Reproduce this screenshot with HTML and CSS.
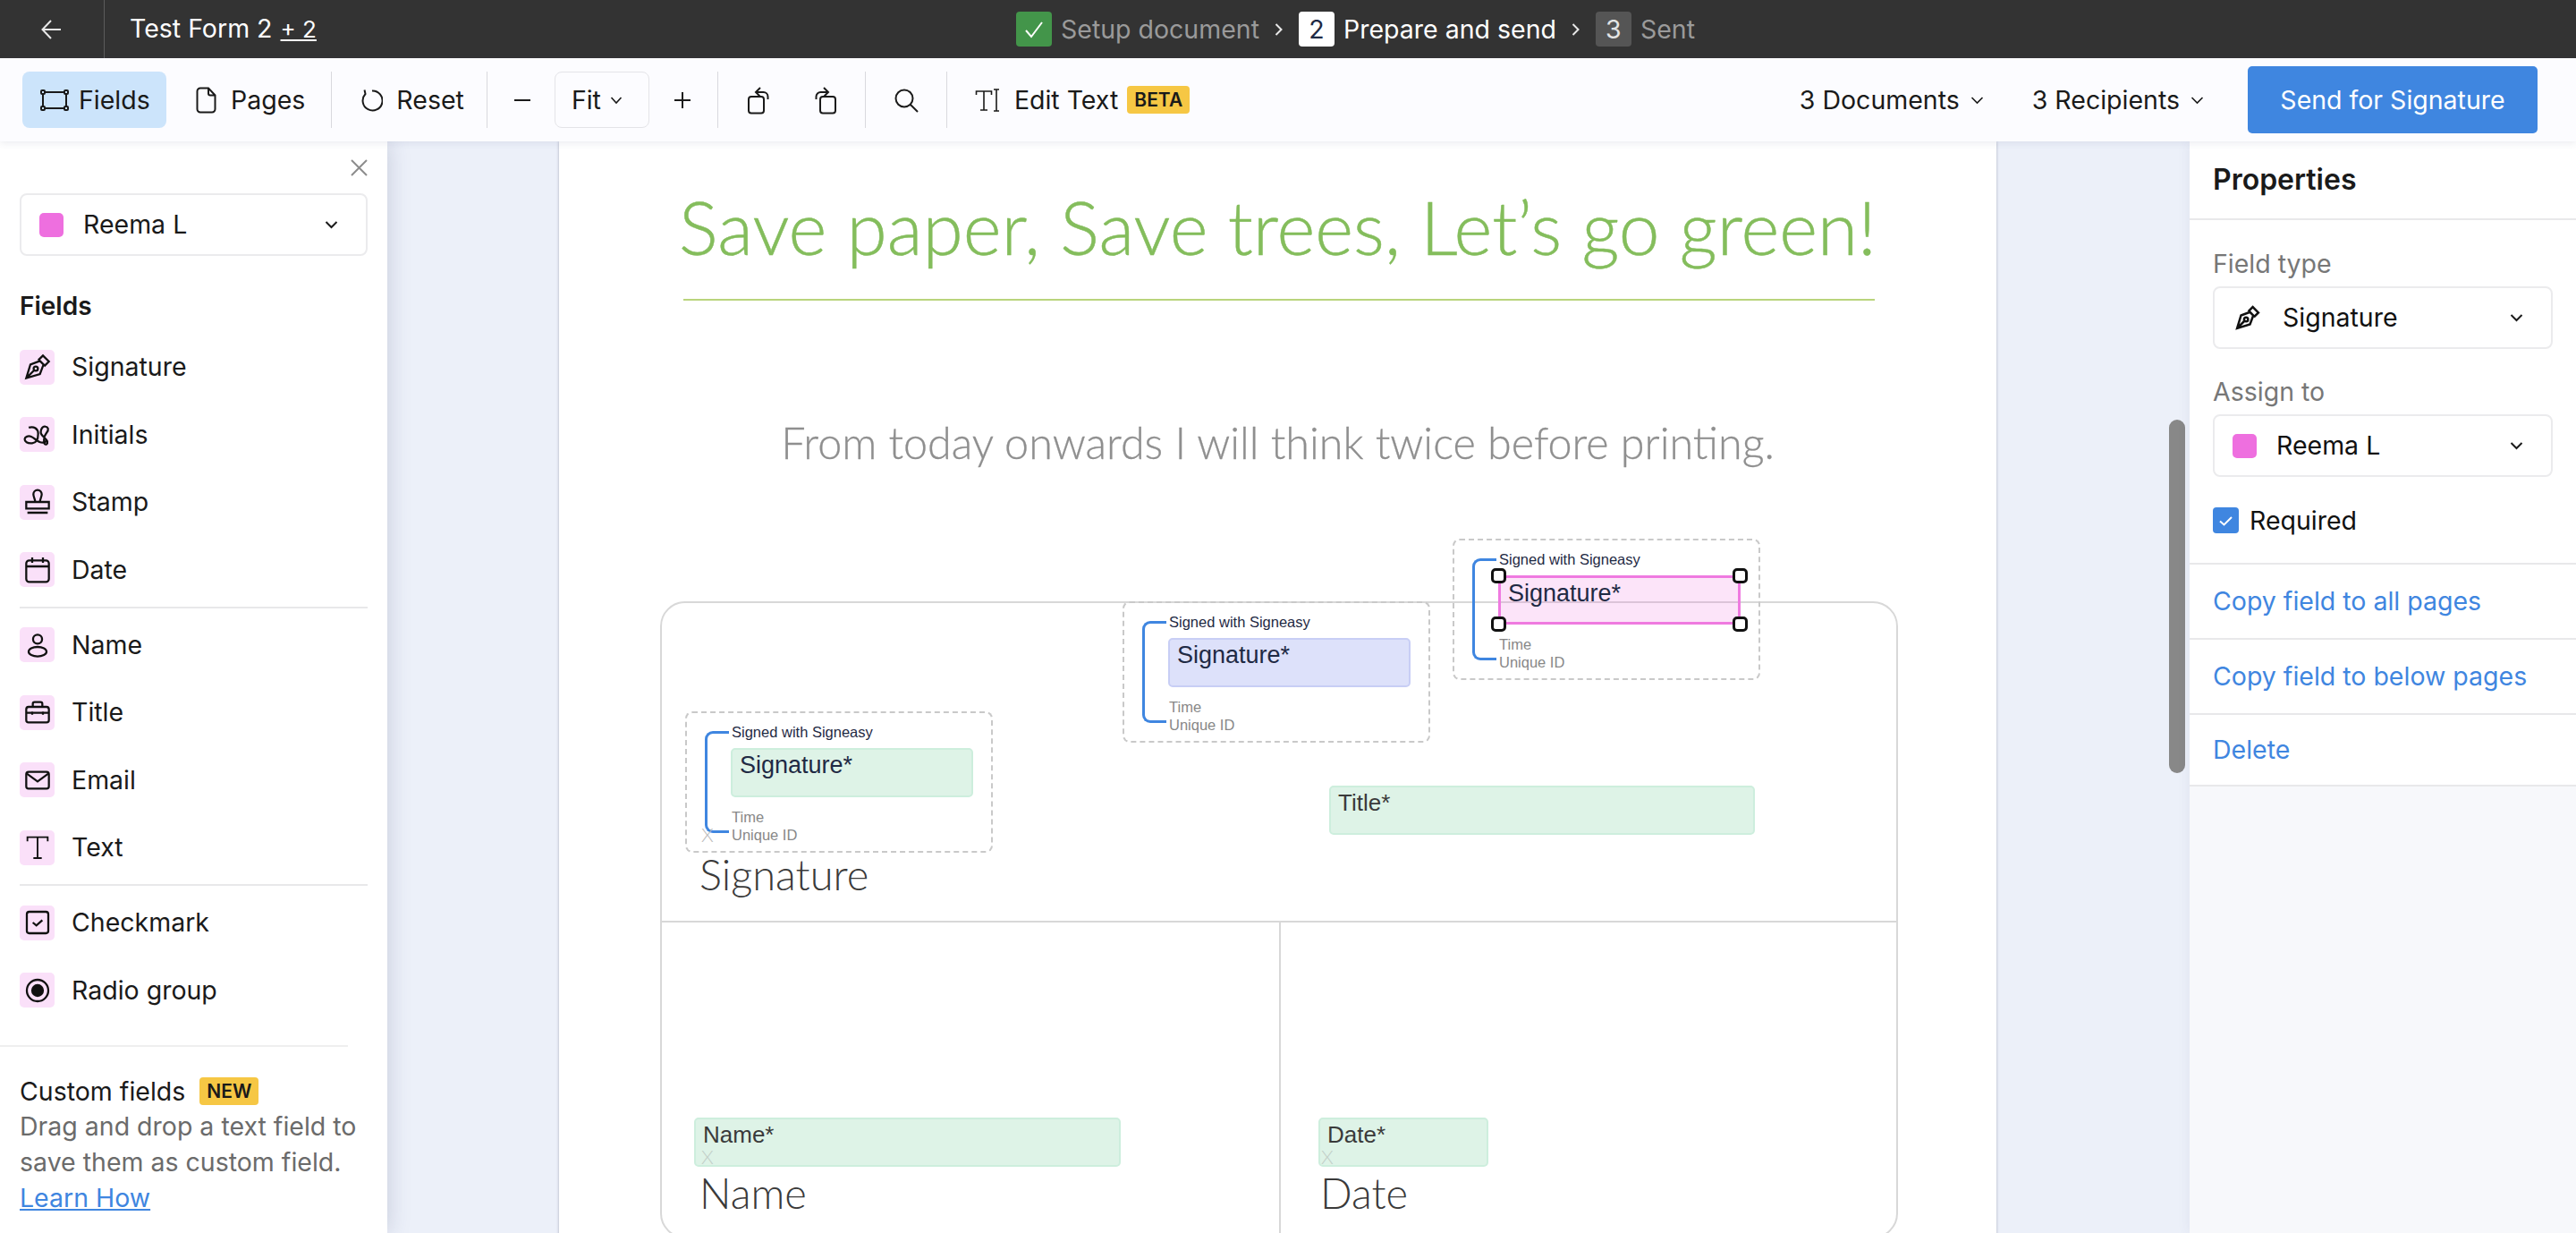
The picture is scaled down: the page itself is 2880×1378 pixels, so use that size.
FILE: index.html
```html
<!DOCTYPE html>
<html>
	<head>
		<meta charset="UTF-8">
		<title>Test Form 2</title>
		<link rel="stylesheet" href="styles.css">
	</head>
	<body>
		<header class="topbar">
			<div class="top-left">
				<a class="back">
					<svg width="24" height="24" viewBox="0 0 24 24"><path d="M22 12H2M11 2 1.500 12 11 22"/></svg>
				</a>
				<div class="doc-title">Test Form 2 <u>+ 2</u></div>
			</div>
			<div class="stepper">
				<span class="step-num done"><svg width="24" height="24" viewBox="0 0 24 24"><path d="M3 13l6 7L21 4"/></svg></span>
				<span class="step-name muted">Setup document</span>
				<svg class="step-arrow" width="10" height="16" viewBox="0 0 10 16"><path d="M1.500 2l6 6-6 6"/></svg>
				<span class="step-num current">2</span>
				<span class="step-name">Prepare and send</span>
				<svg class="step-arrow" width="10" height="16" viewBox="0 0 10 16"><path d="M1.500 2l6 6-6 6"/></svg>
				<span class="step-num todo">3</span>
				<span class="step-name muted">Sent</span>
			</div>
		</header>

		<nav class="toolbar">
			<button class="tool active tool-fields">
				<svg width="32" height="24" viewBox="0 0 32 24" class="ico"><path d="M5 3h22M5 21h22M3 5v14M29 5v14"/><rect x="1" y="1" width="4" height="4" rx="1"/><rect x="27" y="1" width="4" height="4" rx="1"/><rect x="1" y="19" width="4" height="4" rx="1"/><rect x="27" y="19" width="4" height="4" rx="1"/></svg>
				Fields
			</button>
			<button class="tool tool-pages">
				<svg width="23" height="30" viewBox="0 0 23 30" class="ico"><path d="M14 1.500H5a3.500 3.500 0 0 0-3.500 3.500v20A3.500 3.500 0 0 0 5 28.500h13a3.500 3.500 0 0 0 3.500-3.500V9.500zM14 1.500v6a2 2 0 0 0 2 2h5.500"/></svg>
				Pages
			</button>
			<span class="sep"></span>
			<button class="tool tool-reset">
				<svg width="24" height="28" viewBox="0 0 24 28" class="ico"><path d="M12 3.500A11 11 0 1 1 4.500 7L3.500 2.500"/></svg>
				Reset
			</button>
			<span class="sep"></span>
			<button class="icon-btn">
				<svg width="20" height="20" viewBox="0 0 20 20" class="ico"><path d="M1 10h18"/></svg>
			</button>
			<button class="fit">Fit
				<svg width="14" height="10" viewBox="0 0 14 10" class="ico thin"><path d="M1.500 2 7 8l5.500-6"/></svg>
			</button>
			<button class="icon-btn plus">
				<svg width="20" height="20" viewBox="0 0 20 20" class="ico"><path d="M1 10h18M10 1v18"/></svg>
			</button>
			<span class="sep"></span>
			<button class="icon-btn rot-l">
				<svg width="24" height="32" viewBox="0 0 24 32" class="ico"><rect x="1" y="12" width="17" height="18.500" rx="3"/><path d="M22.500 15v-3a5 5 0 0 0-5-5H10M14 2 9 7l5 5"/></svg>
			</button>
			<button class="icon-btn rot-r">
				<svg width="24" height="32" viewBox="0 0 24 32" class="ico"><rect x="6" y="12" width="17" height="18.500" rx="3"/><path d="M1.500 15v-3a5 5 0 0 1 5-5H14M10 2l5 5-5 5"/></svg>
			</button>
			<span class="sep"></span>
			<button class="icon-btn search">
				<svg width="28" height="28" viewBox="0 0 28 28" class="ico"><circle cx="12" cy="12" r="9.500"/><path d="M19 19l8 8"/></svg>
			</button>
			<span class="sep"></span>
			<button class="tool tool-edit">
				<svg width="29" height="28" viewBox="0 0 29 28" class="ico thin"><path d="M1.500 8V4h17v4M10 4v21M6 25h8M21 2h6M21 26h6M24 2v24"/></svg>
				Edit Text
				<span class="badge">BETA</span>
			</button>

			<button class="menu-btn docs">3 Documents
				<svg width="15" height="10" viewBox="0 0 15 10" class="ico thin"><path d="M1.500 2 7.500 8l6-6"/></svg>
			</button>
			<button class="menu-btn recips">3 Recipients
				<svg width="15" height="10" viewBox="0 0 15 10" class="ico thin"><path d="M1.500 2 7.500 8l6-6"/></svg>
			</button>
			<button class="send">Send for Signature</button>
		</nav>

		<main class="main">
			<aside class="left">
				<div class="close-row">
					<svg width="19" height="19" viewBox="0 0 19 19"><path d="M1 1l17 17M18 1 1 18"/></svg>
				</div>
				<div class="select">
					<span class="swatch"></span>
					<span class="select-text">Reema L</span>
					<svg width="15" height="10" viewBox="0 0 15 10" class="ico chev"><path d="M1.500 2 7.500 8l6-6"/></svg>
				</div>
				<h3 class="left-head">Fields</h3>

				<ul class="fields">
					<li><span class="fi"><svg viewBox="0 0 24 24"><path d="M2.500 21.500 6 10l8-3 3 3-3 8zM2.500 21.500l6.500-6.500M12.500 6.500 16.500 2.500l5 5-4 4"/><circle cx="10.500" cy="13.500" r="1.800"/></svg></span>Signature</li>
					<li><span class="fi"><svg viewBox="0 0 24 24"><path d="M4.600 5.900C9 4.500 12.500 7 12.500 11s-1 7.500-5 8-6.500-1.500-6.300-3.500 3-3 5.500-2 4.500 3.500 7 4.500 5 .5 5.500-1M18.500 5c-2-.5-4 2-3.800 5s5 5 5.500 7.500-1.500 3-2.300 2-1-6 1.500-9 1.500-5-.9-5.500"/></svg></span>Initials</li>
					<li><span class="fi"><svg viewBox="0 0 24 24"><path d="M10 12c0-2.500-1.500-4-1.500-6.500a3.500 3.500 0 0 1 7 0C15.500 8 14 9.500 14 12M2.500 12h19v5.500h-19zM3.500 21h17"/></svg></span>Stamp</li>
					<li><span class="fi"><svg viewBox="0 0 24 24"><rect x="2.500" y="4" width="19" height="18" rx="2.500"/><path d="M2.500 9h19M7.500 1.500V6M16.500 1.500V6"/></svg></span>Date</li>
				</ul>
				<hr class="rule">
				<ul class="fields group">
					<li><span class="fi"><svg viewBox="0 0 24 24"><circle cx="12" cy="7" r="3.800"/><ellipse cx="12" cy="17.500" rx="7.500" ry="4"/></svg></span>Name</li>
					<li><span class="fi"><svg viewBox="0 0 24 24"><rect x="2.500" y="7.500" width="19" height="13" rx="2"/><path d="M8 7.500V5a1.500 1.500 0 0 1 1.500-1.500h5A1.500 1.500 0 0 1 16 5v2.500M2.500 12.500h19M7.500 11.500v2.500M16.500 11.500v2.500"/></svg></span>Title</li>
					<li><span class="fi"><svg viewBox="0 0 24 24"><rect x="2.500" y="5" width="19" height="14" rx="2"/><path d="M3 6.500l9 6.500 9-6.500"/></svg></span>Email</li>
					<li><span class="fi"><svg class="thin" viewBox="0 0 24 24"><path d="M3.500 7V3.500h17V7M12 3.500V21M8.500 21h7"/></svg></span>Text</li>
				</ul>
				<hr class="rule">
				<ul class="fields group">
					<li><span class="fi"><svg viewBox="0 0 24 24"><rect x="3" y="3" width="18" height="18" rx="2"/><path d="M8 12l3 2.500 5-4.500"/></svg></span>Checkmark</li>
					<li><span class="fi"><svg viewBox="0 0 24 24"><circle cx="12" cy="12" r="9"/><circle class="dot" cx="12" cy="12" r="4.500"/></svg></span>Radio group</li>
				</ul>

				<div class="custom">
					<div class="custom-head">Custom fields <span class="badge new">NEW</span></div>
					<p>Drag and drop a text field to save them as custom field.</p>
					<a class="learn">Learn How</a>
				</div>
			</aside>

			<section class="canvas">
				<div class="page">
					<h1 class="slogan">Save paper, Save trees, Let’s go green!</h1>
					<div class="slogan-rule"></div>
					<p class="subline">From today onwards I will think twice before printing.</p>

					<div class="doc-table">
						<div class="cell cell-wide"><span>Signature</span></div>
						<div class="cell"><span>Name</span></div>
						<div class="cell"><span>Date</span></div>
					</div>

					<div class="sig-block block-a">
						<i class="bracket"></i>
						<div class="sig-by">Signed with Signeasy</div>
						<div class="field green">Signature*</div>
						<div class="sig-meta">Time<br>Unique ID</div>
						<span class="cross cross-a">X</span>
					</div>
					<div class="sig-block block-b">
						<i class="bracket"></i>
						<div class="sig-by">Signed with Signeasy</div>
						<div class="field blue">Signature*</div>
						<div class="sig-meta">Time<br>Unique ID</div>
					</div>
					<div class="sig-block block-c">
						<i class="bracket"></i>
						<div class="sig-by">Signed with Signeasy</div>
						<div class="field pink">Signature*
							<i class="handle tl"></i><i class="handle tr"></i><i class="handle bl"></i><i class="handle br"></i>
						</div>
						<div class="sig-meta">Time<br>Unique ID</div>
					</div>

					<div class="field green loose f-title">Title*</div>
					<div class="field green loose f-name">Name*<span class="cross">X</span></div>
					<div class="field green loose f-date">Date*<span class="cross">X</span></div>
				</div>
				<div class="scroll-thumb"></div>
			</section>

			<aside class="right">
				<h2 class="right-head">Properties</h2>
				<div class="props">
					<label class="prop-label">Field type</label>
					<div class="select">
						<svg class="nib" width="30" height="30" viewBox="0 0 24 24"><path d="M2.500 21.500 6 10l8-3 3 3-3 8zM2.500 21.500l6.500-6.500M12.500 6.500 16.500 2.500l5 5-4 4"/><circle cx="10.500" cy="13.500" r="1.800"/></svg>
						<span class="select-text">Signature</span>
						<svg width="15" height="10" viewBox="0 0 15 10" class="ico chev"><path d="M1.500 2 7.500 8l6-6"/></svg>
					</div>
					<label class="prop-label second">Assign to</label>
					<div class="select">
						<span class="swatch"></span>
						<span class="select-text">Reema L</span>
						<svg width="15" height="10" viewBox="0 0 15 10" class="ico chev"><path d="M1.500 2 7.500 8l6-6"/></svg>
					</div>
					<div class="required">
						<span class="check"><svg width="17" height="14" viewBox="0 0 17 14"><path d="M2 7.500l4.500 4L15 3"/></svg></span>
						Required
					</div>
				</div>
				<a class="prop-link">Copy field to all pages</a>
				<a class="prop-link">Copy field to below pages</a>
				<a class="prop-link last">Delete</a>
			</aside>
		</main>
	</body>
</html>
```

FILE: styles.css
```css
* {
	box-sizing: border-box;
}
html, body {
	height: 100%;
}
body {
	margin: 0;
	overflow: hidden;
	font: 400 28.500px/36px Inter, "Liberation Sans", sans-serif;
	color: #1a1a1a;
	background: #ecf0f9;
}
button {
	font: inherit;
	color: inherit;
	border: 0;
	background: none;
	padding: 0;
}
svg path, svg rect, svg circle, svg ellipse {
	fill: none;
	stroke: currentColor;
	stroke-width: 2;
}

/* top bar */
.topbar {
	height: 65px;
	background: #333;
	color: #fff;
	display: flex;
	align-items: center;
}
.top-left {
	width: 1136px;
	height: 100%;
	display: flex;
	align-items: center;
}
.back {
	width: 117px;
	height: 100%;
	display: flex;
	align-items: center;
	justify-content: center;
	border-right: 1px solid #5c5c5c;
	color: #e8e8e8;
}
.doc-title {
	margin-left: 28px;
}
.doc-title u {
	font-size: 26px;
	margin-left: 1px;
}
.stepper {
	display: flex;
	align-items: center;
}
.step-num {
	width: 40px;
	height: 39px;
	border-radius: 4px;
	display: flex;
	align-items: center;
	justify-content: center;
}
.step-num.done {
	background: #43954a;
}
.step-num.current {
	background: #fff;
	color: #1f2a44;
}
.step-num.todo {
	background: #555;
	color: #e4e4e4;
}
.step-name {
	margin-left: 10px;
}
.step-name.muted {
	color: #9a9a9a;
}
.step-arrow {
	margin: 0 17px;
	color: #e8e8e8;
}

/* toolbar */
.toolbar {
	position: relative;
	z-index: 3;
	height: 93px;
	padding: 0 43px 0 25px;
	background: #fcfcff;
	box-shadow: 0 2px 8px rgba(60, 70, 110, .1);
	display: flex;
	align-items: center;
}
.ico.thin path {
	stroke-width: 1.600;
}
.tool {
	height: 63px;
	display: flex;
	align-items: center;
	border-radius: 8px;
}
.tool-fields {
	width: 161px;
	padding-left: 20px;
	gap: 11px;
}
.tool.active {
	background: #cce4fb;
}
.tool-pages {
	margin-left: 16px;
	padding: 0 13px 0 17px;
	gap: 16px;
}
.tool-reset {
	padding: 0 9px 0 17px;
	gap: 15px;
}
.tool-edit {
	padding-left: 15px;
	gap: 15px;
}
.sep {
	width: 1px;
	height: 63px;
	margin: 0 16px;
	background: #d9d9de;
}
.icon-btn {
	width: 46px;
	height: 63px;
	display: flex;
	align-items: center;
	justify-content: center;
}
.plus {
	margin-left: 14px;
}
.rot-l {
	margin-left: 6px;
}
.rot-r {
	margin-left: 29px;
	margin-right: 5px;
}
.search {
	margin-left: 6px;
	margin-right: 6px;
}
.fit {
	margin-left: 13px;
	width: 106px;
	height: 63px;
	padding-left: 18px;
	gap: 10px;
	display: flex;
	align-items: center;
	border: 1px solid #e4e4e8;
	border-radius: 8px;
}
.badge {
	background: #f6c744;
	color: #1a1a1a;
	font-size: 21px;
	font-weight: 600;
	line-height: 31px;
	padding: 0 8px;
	border-radius: 4px;
	margin-left: -5px;
}
.menu-btn {
	display: flex;
	align-items: center;
	gap: 12px;
}
.docs {
	margin-left: auto;
}
.recips {
	margin-left: 54px;
}
.send {
	width: 324px;
	height: 75px;
	margin-left: 49px;
	background: #3f86e0;
	color: #fff;
	border-radius: 5px;
}

/* main area */
.main {
	height: calc(100% - 158px);
	display: flex;
	overflow: hidden;
}
.left {
	position: relative;
	z-index: 2;
	width: 433px;
	flex: none;
	padding: 20px 22px 0;
	background: #fff;
	box-shadow: 0 0 24px rgba(60, 70, 110, .22);
}
.close-row {
	height: 19px;
	margin-bottom: 19px;
	display: flex;
	justify-content: flex-end;
	color: #8c8c8c;
}
.select {
	height: 70px;
	padding: 0 20px;
	display: flex;
	align-items: center;
	border: 2px solid #ebebed;
	border-radius: 8px;
	background: #fff;
}
.swatch {
	width: 27px;
	height: 27px;
	border-radius: 5px;
	background: #ee6fdf;
}
.select-text {
	margin-left: 22px;
}
.chev {
	margin-left: auto;
	margin-right: 11px;
}
.left-head {
	margin: 40px 0 32px;
	font-size: 28px;
	font-weight: 600;
	line-height: 32px;
}
.fields {
	list-style: none;
	margin: 0;
	padding: 0;
	display: grid;
	grid-auto-rows: 40px;
	row-gap: 35.500px;
}
.fields.group {
	margin-top: 21px;
}
.fields li {
	display: flex;
	align-items: center;
	gap: 19px;
}
.fi {
	width: 39px;
	height: 39px;
	border-radius: 5px;
	background: #fae0f9;
	display: flex;
	align-items: center;
	justify-content: center;
}
.fi svg {
	width: 32px;
	height: 32px;
	color: #111;
}
.fi svg path, .fi svg rect, .fi svg circle, .fi svg ellipse {
	stroke-width: 1.700;
}
.fi svg.thin path {
	stroke-width: 1.400;
}
.fi .dot {
	fill: #111;
}
.rule {
	margin: 21px 0 0;
	border: 0;
	border-top: 2px solid #e8e8ea;
}
.custom {
	margin: 41px 0 0 -22px;
	padding: 30px 0 0 22px;
	width: 389px;
	border-top: 2px solid #efefef;
	line-height: 40px;
}
.custom-head {
	display: flex;
	align-items: center;
	gap: 16px;
}
.badge.new {
	margin: 0;
	line-height: 31px;
}
.custom p {
	margin: -1px 0 0;
	width: 400px;
	color: #6b6b6b;
}
.learn {
	color: #3f86e0;
	text-decoration: underline;
}

/* document canvas */
.canvas {
	position: relative;
	flex: 1;
	padding-left: 192px;
	overflow: hidden;
}
.page {
	position: relative;
	width: 1607px;
	height: 1400px;
	padding-top: 28px;
	background: #fff;
	box-shadow: 0 0 3px rgba(40, 50, 80, .35);
	font-family: Lato, "Liberation Sans", sans-serif;
	font-weight: 300;
}
.slogan {
	margin: 0;
	font-size: 82px;
	font-weight: 300;
	line-height: 134px;
	text-align: center;
	color: #84bd5c;
	-webkit-text-stroke: .5px #84bd5c;
}
.slogan-rule {
	width: 1332px;
	height: 2px;
	margin: 14px 0 0 139px;
	background: #b9d47c;
}
.subline {
	margin: 128px 0 0;
	font-size: 48.500px;
	line-height: 60px;
	text-align: center;
	color: #8f8f8f;
	-webkit-text-stroke: .3px #8f8f8f;
}
.doc-table {
	position: absolute;
	left: 113px;
	top: 514px;
	width: 1384px;
	height: 712px;
	display: grid;
	grid-template-columns: 692px 1fr;
	grid-template-rows: 357px 1fr;
	border: 2px solid #d8d8d8;
	border-radius: 28px;
}
.cell {
	padding: 0 0 19px 42px;
	display: flex;
	align-items: flex-end;
	font-size: 47px;
	line-height: 60px;
	color: #3a3a3a;
}
.cell:last-child {
	padding-left: 44px;
}
.cell-wide {
	grid-column: 1 / 3;
	padding-bottom: 22px;
	border-bottom: 2px solid #d8d8d8;
}
.cell-wide + .cell {
	border-right: 2px solid #d8d8d8;
}
.sig-block {
	position: absolute;
	width: 344px;
	height: 158px;
	padding: 11px 0 0 49px;
	border: 2px dashed #c9c9c9;
	border-radius: 8px;
	font-family: "Liberation Sans", Arial, sans-serif;
	font-weight: 400;
}
.block-a {
	left: 141px;
	top: 637px;
}
.block-b {
	left: 630px;
	top: 514px;
}
.block-c {
	left: 999px;
	top: 444px;
}
.bracket {
	position: absolute;
	left: 20px;
	top: 20px;
	width: 27px;
	height: 114px;
	border: 3px solid #3f86e0;
	border-right: 0;
	border-radius: 9px 0 0 9px;
}
.sig-by {
	font-size: 16.500px;
	line-height: 20px;
	color: #1f2a44;
	margin-left: 1px;
}
.sig-meta {
	margin: 12px 0 0 1px;
	font-size: 16.500px;
	line-height: 20px;
	color: #888;
}
.field {
	position: relative;
	height: 55px;
	width: 271px;
	margin-top: 8px;
	padding: 0 0 0 8px;
	border: 2px solid;
	border-radius: 5px;
	font-family: "Liberation Sans", Arial, sans-serif;
	font-size: 27px;
	font-weight: 400;
	line-height: 34px;
	color: #1f2a44;
}
.field.green {
	background: #def3e7;
	border-color: #cdeedd;
}
.field.blue {
	background: #dde1fa;
	border-color: #c8cef5;
}
.field.pink {
	background: rgba(239, 122, 224, .2);
	border: 3px solid #ef7ae0;
	border-radius: 0;
}
.field.loose {
	position: absolute;
	margin: 0;
	color: #3a3a3a;
	font-size: 26px;
}
.f-title {
	left: 861px;
	top: 720px;
	width: 476px;
}
.f-name {
	left: 151px;
	top: 1091px;
	width: 477px;
}
.f-date {
	left: 849px;
	top: 1091px;
	width: 190px;
}
.cross {
	position: absolute;
	left: 6px;
	top: 36px;
	font-family: Lato, "Liberation Sans", sans-serif;
	font-size: 22px;
	font-weight: 300;
	line-height: 12px;
	color: #c2cfc8;
}
.f-date .cross {
	left: 1px;
}
.cross-a {
	left: 16px;
	top: 130px;
	color: #bcbcbc;
}
.handle {
	position: absolute;
	width: 17px;
	height: 17px;
	background: #fff;
	border: 3px solid #111;
	border-radius: 5px;
}
.tl {
	left: -11px;
	top: -11px;
}
.tr {
	right: -11px;
	top: -11px;
}
.bl {
	left: -11px;
	bottom: -11px;
}
.br {
	right: -11px;
	bottom: -11px;
}
.scroll-thumb {
	position: absolute;
	left: 1992px;
	top: 311px;
	width: 18px;
	height: 395px;
	border-radius: 9px;
	background: #888;
}

/* properties panel */
.right {
	position: relative;
	z-index: 2;
	width: 432px;
	flex: none;
	background: #f7f8fb;
	box-shadow: 0 0 14px rgba(60, 70, 110, .08);
}
.right-head {
	margin: 0;
	height: 88px;
	padding-left: 26px;
	display: flex;
	align-items: center;
	background: #fff;
	border-bottom: 2px solid #e8e8ea;
	font-size: 32px;
	font-weight: 600;
}
.props {
	padding: 31px 26px 33px;
	background: #fff;
	border-bottom: 2px solid #e8e8ea;
}
.prop-label {
	display: block;
	margin-bottom: 7px;
	color: #777;
}
.prop-label.second {
	margin-top: 30px;
}
.nib {
	margin-left: 2px;
	margin-right: 2px;
	color: #111;
}
.props .select-text {
	color: #111;
}
.required {
	height: 29px;
	margin-top: 34px;
	display: flex;
	align-items: center;
	gap: 12px;
	color: #111;
}
.check {
	width: 29px;
	height: 29px;
	border-radius: 4px;
	background: #3f86e0;
	color: #fff;
	display: flex;
	align-items: center;
	justify-content: center;
}
.prop-link {
	height: 84px;
	padding-left: 26px;
	display: flex;
	align-items: center;
	background: #fff;
	border-bottom: 2px solid #e8e8ea;
	color: #3f86e0;
}
.prop-link.last {
	height: 80px;
}
```
